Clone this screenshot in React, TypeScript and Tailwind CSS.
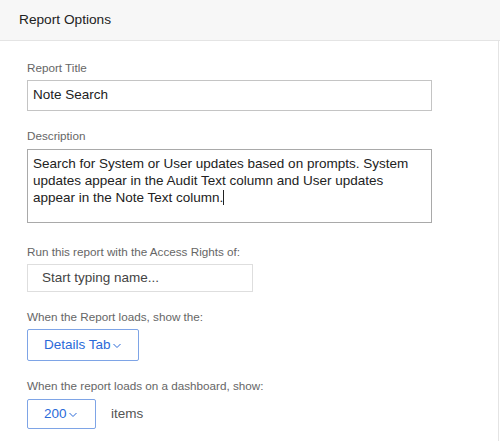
import React from "react";

function Chevron() {
  return (
    <svg width="10" height="6" viewBox="0 0 10 6" className="ml-[1px] mt-[2px]" fill="none">
      <path d="M1.5 1 L5 4.5 L8.5 1" stroke="#2a6ad9" strokeWidth="1" />
    </svg>
  );
}

export default function App() {
  return (
    <div
      className="w-[500px] h-[441px] bg-white overflow-hidden"
      style={{ fontFamily: '"Liberation Sans", Arial, sans-serif' }}
    >
      {/* header */}
      <div className="h-[41px] bg-[#f7f7f7] border-b border-[#e4e4e4] px-[19px] flex items-center text-[13.7px] text-[#222]">
        Report Options
      </div>

      {/* body */}
      <div className="w-[499px] h-[400px] border-r border-[#e4e4e4] pl-[27px] pt-[19px] flex flex-col items-start">
        <label className="text-[11.7px] leading-[16px] text-[#666] mb-[4px]">Report Title</label>
        <div className="w-[405px] h-[31px] border border-[#c4c4c4] flex items-center px-[5px] text-[13.5px] text-[#222]">
          Note Search
        </div>

        <label className="mt-[17px] text-[11.7px] leading-[16px] text-[#666] mb-[5px]">Description</label>
        <div className="w-[405px] h-[74px] border border-[#a9a9a9] px-[5px] pt-[5px] text-[13.5px] leading-[17px] text-[#222]">
          Search for System or User updates based on prompts. System updates appear in the Audit Text column and User updates
          appear in the Note Text column.
          <span className="inline-block w-[1px] h-[15px] bg-[#222] align-[-3px]" />
        </div>

        <label className="mt-[21px] text-[11.7px] leading-[16px] text-[#666] mb-[4px]">
          Run this report with the Access Rights of:
        </label>
        <div className="w-[226px] h-[28px] border border-[#dedede] flex items-center pl-[14px] text-[13.5px] text-[#444]">
          Start typing name...
        </div>

        <label className="mt-[17px] text-[11.7px] leading-[16px] text-[#666] mb-[4px]">
          When the Report loads, show the:
        </label>
        <button className="w-[112px] h-[32px] border border-[#7ea4e6] rounded-[2px] flex items-center pl-[16px] text-[13.5px] text-[#2a6ad9]">
          Details Tab
          <Chevron />
        </button>

        <label className="mt-[17px] text-[11.7px] leading-[16px] text-[#666] mb-[5px]">
          When the report loads on a dashboard, show:
        </label>
        <div className="flex items-center">
          <button className="w-[69px] h-[30px] border border-[#7ea4e6] rounded-[2px] flex items-center pl-[16px] text-[13.5px] text-[#2a6ad9]">
            200
            <Chevron />
          </button>
          <span className="ml-[15px] text-[13.5px] text-[#555]">items</span>
        </div>
      </div>
    </div>
  );
}
